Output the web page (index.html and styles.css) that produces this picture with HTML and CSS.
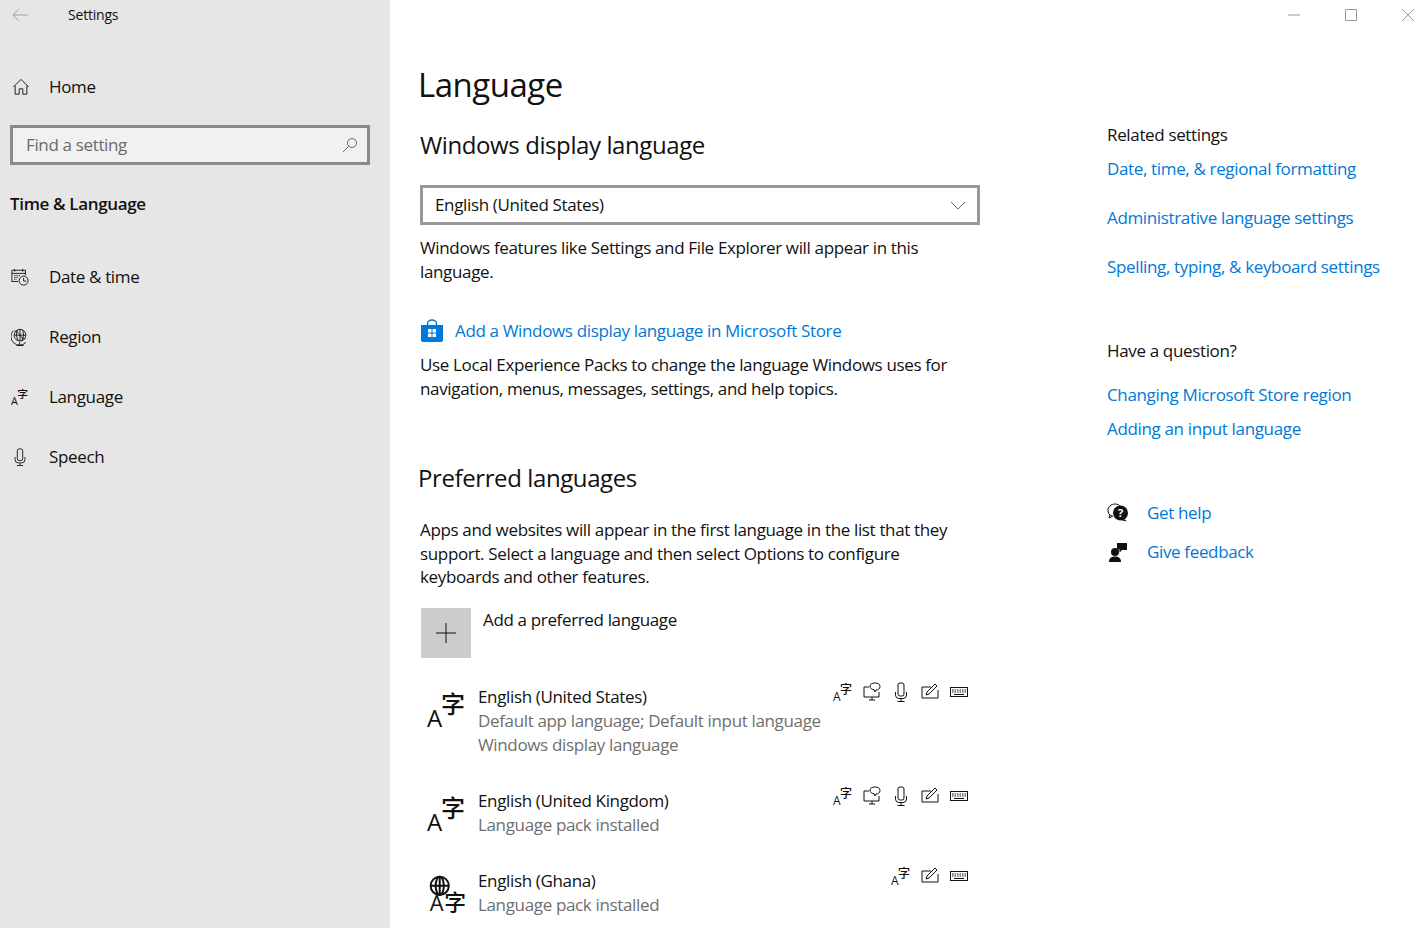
FILE: index.html
```html
<!DOCTYPE html>
<html lang="en">
<head>
    <meta charset="UTF-8">
    <meta name="viewport" content="width=device-width, initial-scale=1.0">
    <title>Settings</title>
    <link rel="stylesheet" href="styles.css">
</head>
<body>
    <svg class="sprites" aria-hidden="true">
        <symbol id="i-lang" viewBox="0 0 40 40">
            <text x="0" y="37" class="g-a">A</text>
            <text x="14" y="23" class="g-zi">字</text>
        </symbol>
        <symbol id="i-lang-globe" viewBox="0 0 44 44">
            <circle cx="14" cy="13" r="10" class="s2"/>
            <ellipse cx="14" cy="13" rx="4.5" ry="10" class="s2"/>
            <path d="M4 13h20M14 3v20" class="s2"/>
            <text x="3" y="41" class="g-a">A</text>
            <text x="19" y="40" class="g-zi">字</text>
        </symbol>
        <symbol id="i-display" viewBox="0 0 20 20">
            <path d="M7 5H2v10h15v-5M7 18h6M10 15v3" class="s1"/>
            <path d="M8 4c0-2 2-3 5-3s5 1 5 3.500-2 3.500-4 3.500l-1 2-1-2.400C10 7.500 8 6.500 8 4z" class="s1"/>
        </symbol>
        <symbol id="i-mic" viewBox="0 0 20 20">
            <rect x="7" y="1" width="6" height="13" rx="2" class="s1"/>
            <path d="M4.500 10v3a3.500 3.500 0 0 0 3.500 3.500h4a3.500 3.500 0 0 0 3.500-3.500v-3M10 17v2M6.500 19.500h7" class="s1"/>
        </symbol>
        <symbol id="i-pen" viewBox="0 0 20 20">
            <path d="M11 5H2v11h16V8" class="s1"/>
            <path d="M6 13l1-3 8-8 2 2-8 8z" class="s1"/>
        </symbol>
        <symbol id="i-keys" viewBox="0 0 20 20">
            <rect x="1.500" y="5.500" width="17" height="9" class="s1"/>
            <path d="M3 8h14M3 10h14" class="d1"/>
            <path d="M5 12.500h10" class="s1"/>
        </symbol>
        <symbol id="i-home" viewBox="0 0 20 20">
            <path d="M1.500 10L10 1.500 18.500 10M3.500 8.500V18h4.500v-6h4v6h4.500V8.500" class="s1"/>
        </symbol>
        <symbol id="i-date" viewBox="0 0 20 20">
            <path d="M8 15H1V2.500h15V8M1 6h15M4 1v3M13 1v3" class="s1"/>
            <path d="M3.500 8.500h7M3.500 10.500h5M3.500 12.500h3" class="d1"/>
            <circle cx="14" cy="14" r="5" class="s1"/>
            <path d="M14 11v3.500h3" class="s1"/>
        </symbol>
        <symbol id="i-region" viewBox="0 0 20 20">
            <circle cx="10" cy="8" r="6.500" class="s1"/>
            <path d="M4 3c3 1 5 3 6 5s3 4 6 4M3.500 8h13M10 1.500v13M7 2.500c-1.500 4-1 8 1 11.500M13 2.500c1.500 4 1 8-1 11.500" class="s1"/>
            <path d="M2.500 3a9.500 9.500 0 0 0 14 13M9.500 16v3M6 19.500h8" class="s1"/>
        </symbol>
        <symbol id="i-bag" viewBox="0 0 24 24">
            <path d="M1 6h22v15a2 2 0 0 1-2 2H3a2 2 0 0 1-2-2z" fill="#0078d7"/>
            <path d="M7.500 7V4.500a4.500 3.500 0 0 1 9 0V7" fill="none" stroke="#0078d7" stroke-width="1.500"/>
            <path d="M8 10h3.500v3.500H8zM12.500 10H16v3.500h-3.500zM8 14.500h3.500V18H8zM12.500 14.500H16V18h-3.500z" fill="#fff"/>
        </symbol>
        <symbol id="i-help" viewBox="0 0 22 20">
            <path d="M5 13c-3-1-4-3-4-6 0-3 3-6 7-6 2.500 0 4.500 1 5.500 2.500M3 12l-1 3 4-2" class="s1"/>
            <circle cx="13.500" cy="10" r="7.500" fill="#111"/>
            <path d="M17 16l3 2.500-5-1z" fill="#111"/>
            <text x="13.500" y="14" class="g-q">?</text>
        </symbol>
        <symbol id="i-feedback" viewBox="0 0 20 20">
            <circle cx="7" cy="10" r="4" fill="#111"/>
            <path d="M1 20c0-4 2.500-5.500 6-5.500s6 1.500 6 5.500z" fill="#111"/>
            <path d="M9 1h10v7h-5l-2.500 2.500V7.500H9z" fill="#111"/>
        </symbol>
    </svg>

    <aside class="sidebar">
        <div class="titlebar">
            <svg class="back" viewBox="0 0 16 14"><path d="M15.500 7H1M7 1L1 7l6 6"/></svg>
            <span class="app-name">Settings</span>
        </div>
        <a class="home-row">
            <svg class="nav-icon"><use href="#i-home"/></svg>
            <span>Home</span>
        </a>
        <div class="search">
            <span>Find a setting</span>
            <svg class="search-icon" viewBox="0 0 16 16"><circle cx="10" cy="6" r="4.500"/><path d="M6.800 9.200L1 15"/></svg>
        </div>
        <div class="section-name">Time &amp; Language</div>
        <nav class="nav">
            <a class="nav-row"><svg class="nav-icon"><use href="#i-date"/></svg><span>Date &amp; time</span></a>
            <a class="nav-row"><svg class="nav-icon"><use href="#i-region"/></svg><span>Region</span></a>
            <a class="nav-row"><svg class="nav-icon"><use href="#i-lang"/></svg><span>Language</span></a>
            <a class="nav-row"><svg class="nav-icon"><use href="#i-mic"/></svg><span>Speech</span></a>
        </nav>
    </aside>

    <div class="content">
        <div class="controls">
            <svg class="ctl" viewBox="0 0 12 12"><path d="M0 6h12"/></svg>
            <svg class="ctl" viewBox="0 0 12 12"><path d="M.5.500h11v11H.5z"/></svg>
            <svg class="ctl" viewBox="0 0 12 12"><path d="M0 0l12 12M12 0L0 12"/></svg>
        </div>
        <div class="columns">
            <main class="main">
                <h1>Language</h1>
                <h2>Windows display language</h2>
                <div class="select">
                    <span>English (United States)</span>
                    <svg class="chevron" viewBox="0 0 16 9"><path d="M1 1l7 7 7-7"/></svg>
                </div>
                <p class="note">Windows features like Settings and File Explorer will appear in this language.</p>
                <a class="store-link"><svg class="bag"><use href="#i-bag"/></svg><span>Add a Windows display language in Microsoft Store</span></a>
                <p class="note-2">Use Local Experience Packs to change the language Windows uses for navigation, menus, messages, settings, and help topics.</p>
                <h2 class="preferred">Preferred languages</h2>
                <p class="note-3">Apps and websites will appear in the first language in the list that they support. Select a language and then select Options to configure keyboards and other features.</p>
                <div class="add-row">
                    <div class="add-btn"><svg viewBox="0 0 20 20"><path d="M10 0v20M0 10h20"/></svg></div>
                    <span>Add a preferred language</span>
                </div>
                <div class="lang-row first">
                    <svg class="lang-icon"><use href="#i-lang"/></svg>
                    <div class="lang-text">
                        <div>English (United States)</div>
                        <div class="muted">Default app language; Default input language</div>
                        <div class="muted">Windows display language</div>
                    </div>
                    <div class="features">
                        <svg><use href="#i-lang"/></svg>
                        <svg><use href="#i-display"/></svg>
                        <svg><use href="#i-mic"/></svg>
                        <svg><use href="#i-pen"/></svg>
                        <svg><use href="#i-keys"/></svg>
                    </div>
                </div>
                <div class="lang-row">
                    <svg class="lang-icon"><use href="#i-lang"/></svg>
                    <div class="lang-text">
                        <div>English (United Kingdom)</div>
                        <div class="muted">Language pack installed</div>
                    </div>
                    <div class="features">
                        <svg><use href="#i-lang"/></svg>
                        <svg><use href="#i-display"/></svg>
                        <svg><use href="#i-mic"/></svg>
                        <svg><use href="#i-pen"/></svg>
                        <svg><use href="#i-keys"/></svg>
                    </div>
                </div>
                <div class="lang-row">
                    <svg class="lang-icon"><use href="#i-lang-globe"/></svg>
                    <div class="lang-text">
                        <div>English (Ghana)</div>
                        <div class="muted">Language pack installed</div>
                    </div>
                    <div class="features">
                        <svg><use href="#i-lang"/></svg>
                        <svg><use href="#i-pen"/></svg>
                        <svg><use href="#i-keys"/></svg>
                    </div>
                </div>
            </main>
            <aside class="related">
                <div class="rel-title">Related settings</div>
                <a class="rel-link">Date, time, &amp; regional formatting</a>
                <a class="rel-link spaced">Administrative language settings</a>
                <a class="rel-link spaced">Spelling, typing, &amp; keyboard settings</a>
                <div class="rel-title question">Have a question?</div>
                <a class="rel-link q-first">Changing Microsoft Store region</a>
                <a class="rel-link q-second">Adding an input language</a>
                <a class="help-row help"><svg><use href="#i-help"/></svg><span>Get help</span></a>
                <a class="help-row feedback"><svg><use href="#i-feedback"/></svg><span>Give feedback</span></a>
            </aside>
        </div>
    </div>
</body>
</html>
```

FILE: styles.css
```css
html, body {
    margin: 0;
    height: 100%;
}
body {
    display: flex;
    height: 100vh;
    overflow: hidden;
    background-color: #fff;
    color: #111;
    font-family: "Open Sans", "Noto Sans", "Liberation Sans", sans-serif;
    font-size: 17px;
    letter-spacing: -0.35px;
    line-height: 24px;
}
.sprites {
    display: none;
}
.s1 {
    fill: none;
    stroke: #111;
    stroke-width: 1;
}
.s2 {
    fill: none;
    stroke: #111;
    stroke-width: 2.2;
}
.d1 {
    fill: none;
    stroke: #111;
    stroke-width: 1;
    stroke-dasharray: 1.500 1;
}
.g-a {
    font-family: "Open Sans", sans-serif;
    font-size: 24px;
    fill: #111;
}
.g-zi {
    font-family: "Noto Sans CJK SC", sans-serif;
    font-size: 24px;
    font-weight: 500;
    fill: #111;
}
.g-q {
    font-family: "Open Sans", sans-serif;
    font-size: 11px;
    font-weight: 700;
    text-anchor: middle;
    fill: #fff;
}

/* left pane */
.sidebar {
    width: 390px;
    flex: none;
    background-color: #e6e6e6;
}
.titlebar {
    display: flex;
    align-items: center;
    height: 30px;
    padding-left: 12px;
    font-size: 14px;
    letter-spacing: -0.2px;
}
.back {
    width: 16px;
    height: 14px;
    fill: none;
    stroke: #a0a0a0;
    stroke-width: 1;
}
.app-name {
    margin-left: 40px;
}
.home-row {
    display: flex;
    align-items: center;
    height: 40px;
    margin-top: 37px;
    padding-left: 12px;
    gap: 19px;
}
.nav-icon {
    width: 18px;
    height: 18px;
    flex: none;
}
.search {
    display: flex;
    align-items: center;
    justify-content: space-between;
    width: 360px;
    height: 40px;
    box-sizing: border-box;
    margin: 18px 0 0 10px;
    padding: 0 9px 0 13px;
    border: 3px solid #8a8a8a;
    background-color: #f1f1f1;
    color: #6b6b6b;
}
.search-icon {
    width: 16px;
    height: 16px;
    fill: none;
    stroke: #6b6b6b;
    stroke-width: 1;
}
.section-name {
    margin: 27px 0 0 10px;
    font-weight: 600;
}
.nav {
    margin-top: 31px;
}
.nav-row {
    display: flex;
    align-items: center;
    height: 60px;
    padding-left: 11px;
    gap: 20px;
}

/* right pane */
.content {
    flex: 1;
    min-width: 0;
}
.controls {
    display: flex;
    justify-content: flex-end;
    align-items: center;
    gap: 45px;
    height: 30px;
    padding-right: 13px;
}
.ctl {
    width: 12px;
    height: 12px;
    fill: none;
    stroke: #999;
    stroke-width: 1;
}
.columns {
    display: flex;
}
.main {
    width: 560px;
    flex: none;
    margin-left: 30px;
    padding-top: 33px;
}
h1 {
    margin: 0 0 0 -2px;
    font-size: 33px;
    font-weight: 400;
    line-height: 44px;
    letter-spacing: -0.5px;
}
h2 {
    margin: 20px 0 0;
    font-size: 24px;
    font-weight: 400;
    line-height: 36px;
    letter-spacing: -0.4px;
}
h2.preferred {
    margin: 59px 0 0 -2px;
}
p {
    margin: 0;
}
.select {
    display: flex;
    align-items: center;
    justify-content: space-between;
    height: 40px;
    box-sizing: border-box;
    margin-top: 22px;
    padding: 0 11px 0 12px;
    border: 3px solid #999;
}
.chevron {
    width: 16px;
    height: 9px;
    fill: none;
    stroke: #666;
    stroke-width: 1;
}
.note {
    margin-top: 11px;
}
.store-link {
    display: flex;
    align-items: center;
    gap: 11px;
    height: 30px;
    margin-top: 32px;
    color: #0078d7;
}
.bag {
    width: 24px;
    height: 24px;
}
.note-2 {
    margin-top: 7px;
}
.note-3 {
    margin-top: 22px;
    line-height: 23.5px;
}
.add-row {
    display: flex;
    align-items: flex-start;
    gap: 12px;
    margin: 19px 0 0 1px;
}
.add-btn {
    display: flex;
    align-items: center;
    justify-content: center;
    width: 50px;
    height: 50px;
    background-color: #ccc;
}
.add-btn svg {
    width: 20px;
    height: 20px;
    fill: none;
    stroke: #111;
    stroke-width: 1;
}
.lang-row {
    display: flex;
    margin-top: 32px;
}
.lang-row.first {
    margin-top: 27px;
}
.lang-icon {
    width: 40px;
    height: 40px;
    flex: none;
    margin: 5px 11px 0 7px;
}
.lang-text {
    flex: 1;
    min-width: 0;
    white-space: nowrap;
}
.muted {
    color: #6f6f6f;
}
.features {
    display: flex;
    justify-content: flex-end;
    gap: 9px;
    flex: none;
    height: 20px;
    margin-top: -3px;
    padding-right: 11px;
}
.features svg {
    width: 20px;
    height: 20px;
}
.related {
    width: 320px;
    flex: none;
    margin-left: 127px;
    padding-top: 93px;
}
.rel-link, .help-row {
    display: block;
    color: #0078d7;
    white-space: nowrap;
}
.rel-title + .rel-link {
    margin-top: 10px;
}
.rel-link.spaced {
    margin-top: 25px;
}
.rel-title.question {
    margin-top: 60px;
}
.rel-title + .rel-link.q-first {
    margin-top: 20px;
}
.rel-link.q-second {
    margin-top: 10px;
}
.help-row {
    display: flex;
    align-items: center;
    gap: 18px;
}
.help-row svg {
    width: 22px;
    height: 20px;
    flex: none;
}
.help-row.help {
    margin-top: 60px;
}
.help-row.feedback {
    margin-top: 15px;
}
```
